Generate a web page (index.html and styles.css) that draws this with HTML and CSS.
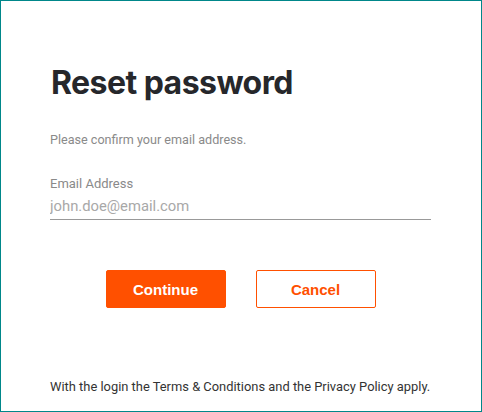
FILE: index.html
```html
<!DOCTYPE html>
<html lang="en">
<head>
<meta charset="utf-8">
<title>Reset password</title>
<link rel="stylesheet" href="styles.css">
</head>
<body>
<div class="frame">
  <main class="card">
    <h1 class="title">Reset password</h1>
    <p class="intro">Please confirm your email address.</p>
    <label class="field">
      <span class="field-label">Email Address</span>
      <input class="field-input" type="email" placeholder="john.doe@email.com">
    </label>
    <div class="actions">
      <button class="btn btn-primary" type="button">Continue</button>
      <button class="btn btn-secondary" type="button">Cancel</button>
    </div>
  </main>
  <footer class="legal">With the login the Terms &amp; Conditions and the Privacy Policy apply.</footer>
</div>
</body>
</html>
```
FILE: styles.css
```css
html, body {
  margin: 0;
  padding: 0;
  background: #ffffff;
}
.frame {
  box-sizing: border-box;
  width: 482px;
  height: 412px;
  border: 1px solid #00878a;
  display: flex;
  flex-direction: column;
  padding: 0 50px 0 49px;
  font-family: Roboto, "Liberation Sans", sans-serif;
}
.card {
  flex: 1;
  display: flex;
  flex-direction: column;
}
.title {
  margin: 62px 0 0 1px;
  font-family: Inter, "Liberation Sans", sans-serif;
  font-weight: 700;
  font-size: 32px;
  line-height: 40px;
  color: #26272b;
  letter-spacing: -0.55px;
}
.intro {
  margin: 29px 0 0;
  font-size: 12.6px;
  line-height: 16px;
  color: #8a8a8a;
}
.field {
  display: flex;
  flex-direction: column;
  margin-top: 28px;
}
.field-label {
  font-size: 13px;
  line-height: 16px;
  color: #8a8a8a;
}
.field-input {
  margin-top: 4px;
  border: none;
  border-bottom: 1px solid #999999;
  padding: 0 0 3px;
  height: 20px;
  font-family: Roboto, "Liberation Sans", sans-serif;
  font-size: 14.8px;
  color: #555;
  outline: none;
  background: transparent;
}
.field-input::placeholder {
  color: #a8a8a8;
}
.actions {
  display: flex;
  justify-content: center;
  gap: 30px;
  margin-top: 50px;
}
.btn {
  box-sizing: border-box;
  width: 120px;
  height: 38px;
  border-radius: 2px;
  font-family: Arial, "Liberation Sans", sans-serif;
  font-weight: 700;
  font-size: 15px;
  cursor: pointer;
}
.btn-primary {
  background: #ff5000;
  border: 1px solid #ff5000;
  color: #ffffff;
}
.btn-secondary {
  background: #ffffff;
  border: 1px solid #ff5000;
  color: #ff5000;
}
.legal {
  font-size: 12.9px;
  line-height: 16px;
  white-space: nowrap;
  color: #333333;
  margin-bottom: 16px;
}
```
